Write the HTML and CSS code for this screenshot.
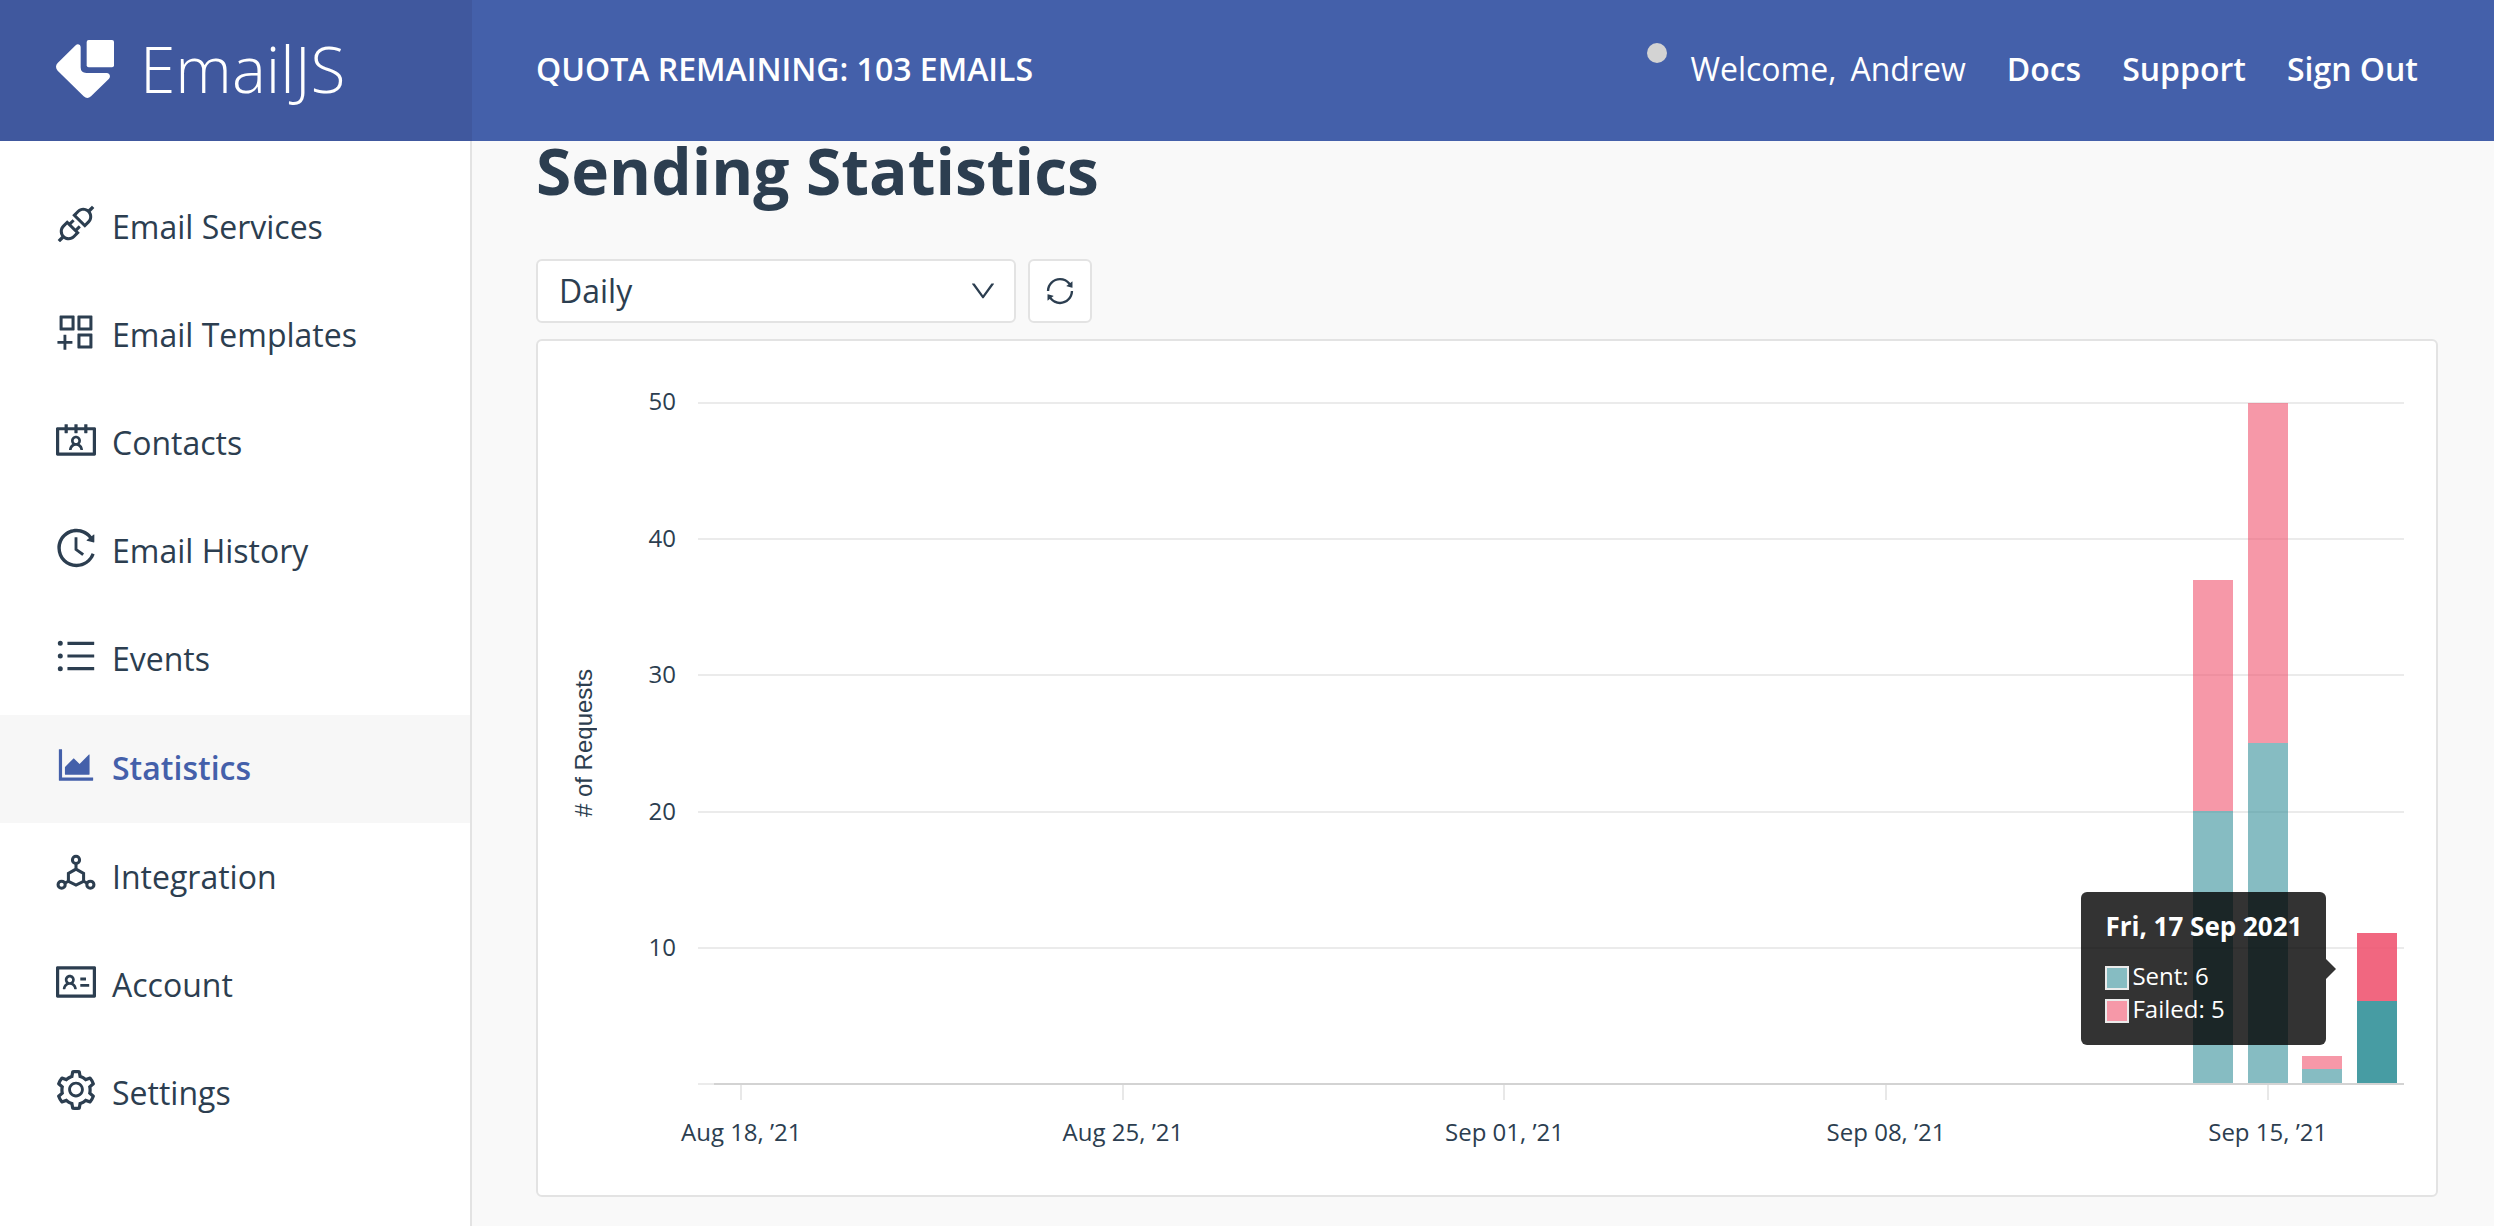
FILE: index.html
```html
<!DOCTYPE html>
<html lang="en">
<head>
<meta charset="utf-8">
<meta name="viewport" content="width=device-width, initial-scale=1">
<title>Sending Statistics - EmailJS</title>
<link rel="stylesheet" href="styles.css">
</head>
<body>
<div class="app">
  <header class="header">
    <a class="brand" href="#">
      <svg class="brand-mark" viewBox="168 120 174 174" aria-hidden="true">
        <rect x="260" y="120" width="82" height="82" rx="6"/>
        <path d="M227 136C233 130 242 134 242 142V202Q242 219 259 219H320C329 219 333 229 327 236L273 289Q262 299 251 289L173 212Q163 200 173 189Z"/>
      </svg>
      <span class="brand-name">EmailJS</span>
    </a>
    <div class="quota">QUOTA REMAINING: 103 EMAILS</div>
    <nav class="user-nav" aria-label="User">
      <span class="status-dot"></span>
      <span class="welcome"><span>Welcome,</span><span>Andrew</span></span>
      <a class="user-link" href="#">Docs</a>
      <a class="user-link" href="#">Support</a>
      <a class="user-link" href="#">Sign Out</a>
    </nav>
  </header>

  <nav class="sidebar" aria-label="Main">
    <a class="menu-item" href="#">
      <svg class="menu-icon" viewBox="64 64 896 896" aria-hidden="true"><path d="M917.7 148.8l-42.4-42.4c-1.6-1.6-3.6-2.3-5.7-2.3s-4.1.8-5.7 2.3l-76.1 76.1a199.27 199.27 0 00-112.1-34.3c-51.2 0-102.4 19.5-141.5 58.6L432.3 308.7a8.03 8.03 0 000 11.3L704 591.7c1.6 1.6 3.6 2.3 5.7 2.3 2 0 4.1-.8 5.7-2.3l101.9-101.9c68.9-69 77-175.7 24.3-253.5l76.1-76.1c3.1-3.2 3.1-8.3 0-11.4zM769.1 441.7l-59.4 59.4-186.8-186.8 59.4-59.4c24.9-24.9 58.1-38.7 93.4-38.7 35.3 0 68.4 13.7 93.4 38.7 24.9 24.9 38.7 58.1 38.7 93.4 0 35.3-13.8 68.4-38.7 93.4zm-190.2 105a8.03 8.03 0 00-11.3 0L501 613.3 410.7 523l66.7-66.7c3.1-3.1 3.1-8.2 0-11.3L441 408.6a8.03 8.03 0 00-11.3 0L363 475.3l-43-43a7.85 7.85 0 00-5.7-2.3c-2 0-4.1.8-5.7 2.3L206.8 534.2c-68.9 69-77 175.7-24.3 253.5l-76.1 76.1a8.03 8.03 0 000 11.3l42.4 42.4c1.6 1.6 3.6 2.3 5.7 2.3s4.1-.8 5.7-2.3l76.1-76.1c33.7 22.9 72.9 34.3 112.1 34.3 51.2 0 102.4-19.5 141.5-58.6l101.9-101.9c3.1-3.1 3.1-8.2 0-11.3l-43-43 66.7-66.7c3.1-3.1 3.1-8.2 0-11.3l-36.6-36.2zM441.7 769.1a131.32 131.32 0 01-93.4 38.7c-35.3 0-68.4-13.7-93.4-38.7a131.32 131.32 0 01-38.7-93.4c0-35.3 13.7-68.4 38.7-93.4l59.4-59.4 186.8 186.8-59.4 59.4z"/></svg>
      <span>Email Services</span>
    </a>
    <a class="menu-item" href="#">
      <svg class="menu-icon" viewBox="64 64 896 896" aria-hidden="true"><path d="M464 144H160c-8.8 0-16 7.2-16 16v304c0 8.8 7.2 16 16 16h304c8.8 0 16-7.2 16-16V160c0-8.8-7.2-16-16-16zm-52 268H212V212h200v200zm452-268H560c-8.8 0-16 7.2-16 16v304c0 8.8 7.2 16 16 16h304c8.8 0 16-7.2 16-16V160c0-8.8-7.2-16-16-16zm-52 268H612V212h200v200zm52 132H560c-8.8 0-16 7.2-16 16v304c0 8.8 7.2 16 16 16h304c8.8 0 16-7.2 16-16V560c0-8.8-7.2-16-16-16zm-52 268H612V612h200v200zM424 712H296V584c0-4.4-3.6-8-8-8h-48c-4.4 0-8 3.6-8 8v128H104c-4.4 0-8 3.6-8 8v48c0 4.4 3.6 8 8 8h128v128c0 4.4 3.6 8 8 8h48c4.4 0 8-3.6 8-8V776h128c4.4 0 8-3.6 8-8v-48c0-4.4-3.6-8-8-8z"/></svg>
      <span>Email Templates</span>
    </a>
    <a class="menu-item" href="#">
      <svg class="menu-icon" viewBox="64 64 896 896" aria-hidden="true"><path d="M594.3 601.5a111.8 111.8 0 0029.1-75.5c0-61.9-49.9-112-111.4-112s-111.4 50.1-111.4 112c0 29.1 11 55.5 29.1 75.5a158.09 158.09 0 00-74.6 126.1 8 8 0 008 8.4H407c4.2 0 7.6-3.3 7.9-7.5 3.8-50.6 46-90.5 97.2-90.5s93.4 40 97.2 90.5c.3 4.2 3.7 7.5 7.9 7.5H661a8 8 0 008-8.4c-2.8-53.3-32-99.7-74.7-126.1zM512 578c-28.5 0-51.7-23.3-51.7-52s23.2-52 51.7-52 51.7 23.3 51.7 52-23.2 52-51.7 52zm416-354H768v-56c0-4.4-3.6-8-8-8h-56c-4.4 0-8 3.6-8 8v56H548v-56c0-4.4-3.6-8-8-8h-56c-4.4 0-8 3.6-8 8v56H328v-56c0-4.4-3.6-8-8-8h-56c-4.4 0-8 3.6-8 8v56H96c-17.7 0-32 14.3-32 32v576c0 17.7 14.3 32 32 32h832c17.7 0 32-14.3 32-32V256c0-17.7-14.3-32-32-32zm-40 568H136V296h120v56c0 4.4 3.6 8 8 8h56c4.4 0 8-3.6 8-8v-56h148v56c0 4.4 3.6 8 8 8h56c4.4 0 8-3.6 8-8v-56h148v56c0 4.4 3.6 8 8 8h56c4.4 0 8-3.6 8-8v-56h120v496z"/></svg>
      <span>Contacts</span>
    </a>
    <a class="menu-item" href="#">
      <svg class="menu-icon" viewBox="64 64 896 896" aria-hidden="true"><path d="M536.1 273H488c-4.4 0-8 3.6-8 8v275.3c0 2.6 1.2 5 3.3 6.5l165.3 120.7c3.6 2.6 8.6 1.9 11.2-1.7l28.6-39c2.7-3.7 1.9-8.7-1.7-11.2L544.1 528.5V281c0-4.4-3.6-8-8-8zm219.8 75.2l156.8 38.3c5 1.2 9.9-2.6 9.9-7.7l.8-161.5c0-6.7-7.7-10.5-12.9-6.3L752.9 334.1a8 8 0 003 14.1zm167.7 301.1l-56.7-19.5a8 8 0 00-10.1 4.8c-1.9 5.1-3.9 10.1-6 15.1-17.8 42.1-43.3 80-75.9 112.5a353 353 0 01-112.5 75.9 352.18 352.18 0 01-137.7 27.8c-47.8 0-94.1-9.3-137.7-27.8a353 353 0 01-112.5-75.9c-32.5-32.5-58-70.4-75.9-112.5A353.44 353.44 0 01171 512c0-47.8 9.3-94.2 27.8-137.8 17.8-42.1 43.3-80 75.9-112.5a353 353 0 01112.5-75.9C430.6 167.3 477 158 524.8 158s94.1 9.3 137.7 27.8A353 353 0 01775 261.7c10.2 10.3 19.8 21 28.6 32.3l59.8-46.8C784.7 146.6 662.2 81.9 524.6 82 285 82.1 92.6 276.7 95 516.4 97.4 751.9 288.9 942 524.8 942c185.5 0 343.5-117.6 403.7-282.3 1.5-4.2-.7-8.9-4.9-10.4z"/></svg>
      <span>Email History</span>
    </a>
    <a class="menu-item" href="#">
      <svg class="menu-icon" viewBox="64 64 896 896" aria-hidden="true"><path d="M912 192H328c-4.4 0-8 3.6-8 8v56c0 4.4 3.6 8 8 8h584c4.4 0 8-3.6 8-8v-56c0-4.4-3.6-8-8-8zm0 284H328c-4.4 0-8 3.6-8 8v56c0 4.4 3.6 8 8 8h584c4.4 0 8-3.6 8-8v-56c0-4.4-3.6-8-8-8zm0 284H328c-4.4 0-8 3.6-8 8v56c0 4.4 3.6 8 8 8h584c4.4 0 8-3.6 8-8v-56c0-4.4-3.6-8-8-8zM104 228a56 56 0 10112 0 56 56 0 10-112 0zm0 284a56 56 0 10112 0 56 56 0 10-112 0zm0 284a56 56 0 10112 0 56 56 0 10-112 0z"/></svg>
      <span>Events</span>
    </a>
    <a class="menu-item menu-item-active" href="#" aria-current="page">
      <svg class="menu-icon" viewBox="64 64 896 896" aria-hidden="true"><path d="M888 792H200V168c0-4.4-3.6-8-8-8h-56c-4.4 0-8 3.6-8 8v688c0 4.4 3.6 8 8 8h752c4.4 0 8-3.6 8-8v-56c0-4.4-3.6-8-8-8zm-616-64h536c4.4 0 8-3.6 8-8V284c0-7.2-8.7-10.7-13.7-5.7L592 488.6l-125.4-124a8.03 8.03 0 00-11.3 0l-189 189.6a7.87 7.87 0 00-2.3 5.6V720c0 4.4 3.6 8 8 8z"/></svg>
      <span>Statistics</span>
    </a>
    <a class="menu-item" href="#">
      <svg class="menu-icon menu-icon-line" viewBox="64 64 896 896" aria-hidden="true">
        <circle cx="512" cy="196" r="80"/><circle cx="190" cy="752" r="80"/><circle cx="834" cy="752" r="80"/>
        <path d="M512 276V402M512 402L682 498V674L512 762L342 674V498ZM342 674L262 716M682 674L762 716"/>
      </svg>
      <span>Integration</span>
    </a>
    <a class="menu-item" href="#">
      <svg class="menu-icon" viewBox="64 64 896 896" aria-hidden="true"><path d="M928 160H96c-17.7 0-32 14.3-32 32v640c0 17.7 14.3 32 32 32h832c17.7 0 32-14.3 32-32V192c0-17.7-14.3-32-32-32zm-40 632H136V232h752v560zM610.3 476h123.4c1.3 0 2.3-3.6 2.3-8v-48c0-4.4-1-8-2.3-8H610.3c-1.3 0-2.3 3.6-2.3 8v48c0 4.4 1 8 2.3 8zm4.8 144h185.7c3.9 0 7.1-3.6 7.1-8v-48c0-4.4-3.2-8-7.1-8H615.1c-3.9 0-7.1 3.6-7.1 8v48c0 4.4 3.2 8 7.1 8zM224 673h43.9c4.2 0 7.6-3.3 7.9-7.5 3.8-50.5 46-90.5 97.2-90.5s93.4 40 97.2 90.5c.3 4.2 3.7 7.5 7.9 7.5H522a8 8 0 008-8.4c-2.8-53.3-32-99.7-74.6-126.1a111.8 111.8 0 0029.1-75.5c0-61.9-49.9-112-111.4-112s-111.4 50.1-111.4 112c0 29.1 11 55.5 29.1 75.5a158.09 158.09 0 00-74.6 126.1c-.4 4.6 3.2 8.4 7.8 8.4zm149-262c28.5 0 51.7 23.3 51.7 52s-23.2 52-51.7 52-51.7-23.3-51.7-52 23.2-52 51.7-52z"/></svg>
      <span>Account</span>
    </a>
    <a class="menu-item" href="#">
      <svg class="menu-icon" viewBox="64 64 896 896" aria-hidden="true"><path d="M924.8 625.7l-65.5-56c3.1-19 4.7-38.4 4.7-57.8s-1.6-38.8-4.7-57.8l65.5-56a32.03 32.03 0 009.3-35.2l-.9-2.6a443.74 443.74 0 00-79.7-137.9l-1.8-2.1a32.12 32.12 0 00-35.1-9.5l-81.3 28.9c-30-24.6-63.5-44-99.7-57.6l-15.7-85a32.05 32.05 0 00-25.8-25.7l-2.7-.5c-52.1-9.4-106.9-9.4-159 0l-2.7.5a32.05 32.05 0 00-25.8 25.7l-15.8 85.4a351.86 351.86 0 00-99 57.4l-81.9-29.1a32 32 0 00-35.1 9.5l-1.8 2.1a446.02 446.02 0 00-79.7 137.9l-.9 2.6c-4.5 12.5-.8 26.5 9.3 35.2l66.3 56.6c-3.1 18.8-4.6 38-4.6 57.1 0 19.2 1.5 38.4 4.6 57.1L99 625.5a32.03 32.03 0 00-9.3 35.2l.9 2.6c18.1 50.4 44.9 96.9 79.7 137.9l1.8 2.1a32.12 32.12 0 0035.1 9.5l81.9-29.1c29.8 24.5 63.1 43.9 99 57.4l15.8 85.4a32.05 32.05 0 0025.8 25.7l2.7.5a449.4 449.4 0 00159 0l2.7-.5a32.05 32.05 0 0025.8-25.7l15.7-85a350 350 0 0099.7-57.6l81.3 28.9a32 32 0 0035.1-9.5l1.8-2.1c34.8-41.1 61.6-87.5 79.7-137.9l.9-2.6c4.5-12.3.8-26.3-9.3-35zM788.3 465.9c2.5 15.1 3.8 30.6 3.8 46.1s-1.3 31-3.8 46.1l-6.6 40.1 74.7 63.9a370.03 370.03 0 01-42.6 73.6L721 702.8l-31.4 25.8c-23.9 19.6-50.5 35-79.3 45.8l-38.1 14.3-17.9 97a377.5 377.5 0 01-85 0l-17.9-97.2-37.8-14.5c-28.5-10.8-55-26.2-78.7-45.7l-31.4-25.9-93.4 33.2c-17-22.9-31.2-47.6-42.6-73.6l75.5-64.5-6.5-40c-2.4-14.9-3.7-30.3-3.7-45.5 0-15.3 1.2-30.6 3.7-45.5l6.5-40-75.5-64.5c11.3-26.1 25.6-50.7 42.6-73.6l93.4 33.2 31.4-25.9c23.7-19.5 50.2-34.9 78.7-45.7l37.9-14.3 17.9-97.2c28.1-3.2 56.8-3.2 85 0l17.9 97 38.1 14.3c28.7 10.8 55.4 26.2 79.3 45.8l31.4 25.8 92.8-32.9c17 22.9 31.2 47.6 42.6 73.6L781.8 426l6.5 39.9zM512 326c-97.2 0-176 78.8-176 176s78.8 176 176 176 176-78.8 176-176-78.8-176-176-176zm79.2 255.2A111.6 111.6 0 01512 614c-29.9 0-58-11.7-79.2-32.8A111.6 111.6 0 01400 502c0-29.9 11.7-58 32.8-79.2C454 401.6 482.1 390 512 390c29.9 0 58 11.6 79.2 32.8A111.6 111.6 0 01624 502c0 29.9-11.7 58-32.8 79.2z"/></svg>
      <span>Settings</span>
    </a>
  </nav>

  <main class="content">
    <h1 class="page-title">Sending Statistics</h1>
    <div class="toolbar">
      <div class="select-wrap">
        <select class="select" aria-label="Interval">
          <option>Daily</option>
          <option>Monthly</option>
        </select>
        <svg class="select-arrow" viewBox="64 64 896 896" aria-hidden="true"><path d="M884 256h-75c-5.1 0-9.9 2.5-12.9 6.6L512 654.2 227.9 262.6c-3-4.1-7.8-6.6-12.9-6.6h-75c-6.5 0-10.3 7.4-6.5 12.7l352.6 486.1c12.8 17.6 39 17.6 51.7 0l352.6-486.1c3.9-5.3.1-12.7-6.4-12.7z"/></svg>
      </div>
      <button class="refresh" type="button" aria-label="Refresh">
        <svg class="refresh-icon" viewBox="64 64 896 896" aria-hidden="true"><path d="M168 504.2c1-43.7 10-86.1 26.9-126 17.3-41 42.1-77.7 73.7-109.4S337 212.3 378 195c42.4-17.9 87.4-27 133.9-27s91.5 9.1 133.8 27A341.5 341.5 0 01755 268.8c9.9 9.9 19.2 20.4 27.8 31.4l-60.2 47a8 8 0 003 14.1l175.7 43c5 1.2 9.9-2.6 9.9-7.7l.8-180.9c0-6.7-7.7-10.5-12.9-6.3l-56.4 44.1C765.8 155.1 646.2 92 511.8 92 282.7 92 96.3 275.6 92 503.8a8 8 0 008 8.2h60c4.4 0 7.9-3.5 8-7.8zm756 7.8h-60c-4.4 0-7.9 3.5-8 7.8-1 43.7-10 86.1-26.9 126-17.3 41-42.1 77.8-73.7 109.4A342.45 342.45 0 01512.1 856a342.24 342.24 0 01-243.2-100.8c-9.9-9.9-19.2-20.4-27.8-31.4l60.2-47a8 8 0 00-3-14.1l-175.7-43c-5-1.2-9.9 2.6-9.9 7.7l-.7 181c0 6.7 7.7 10.5 12.9 6.3l56.4-44.1C258.2 868.9 377.8 932 512.2 932c229.2 0 415.5-183.7 419.8-411.8a8 8 0 00-8-8.2z"/></svg>
      </button>
    </div>

    <section class="chart" aria-label="Requests per day">
      <div class="y-title">
        <span class="y-title-text"># of Requests</span>
      </div>
      <div class="y-labels">
        <span>50</span><span>40</span><span>30</span><span>20</span><span>10</span>
      </div>
      <div class="plot">
        <div class="grid-lines">
          <i></i><i></i><i></i><i></i><i></i>
        </div>
        <div class="days bars">
          <div class="day day-28">
            <div class="bar bar-failed" style="height:34%"></div>
            <div class="bar bar-sent" style="height:40%"></div>
          </div>
          <div class="day day-29">
            <div class="bar bar-failed" style="height:50%"></div>
            <div class="bar bar-sent" style="height:50%"></div>
          </div>
          <div class="day day-30">
            <div class="bar bar-failed" style="height:2%"></div>
            <div class="bar bar-sent" style="height:2%"></div>
          </div>
          <div class="day day-31 day-hover">
            <div class="bar bar-failed" style="height:10%"></div>
            <div class="bar bar-sent" style="height:12%"></div>
            <div class="tooltip" role="tooltip">
              <div class="tooltip-title">Fri, 17 Sep 2021</div>
              <div class="tooltip-row"><span class="swatch swatch-sent"></span>Sent: 6</div>
              <div class="tooltip-row"><span class="swatch swatch-failed"></span>Failed: 5</div>
            </div>
          </div>
        </div>
      </div>
      <div class="days x-axis">
        <span class="x-label day-1">Aug 18, ’21</span>
        <span class="x-label day-8">Aug 25, ’21</span>
        <span class="x-label day-15">Sep 01, ’21</span>
        <span class="x-label day-22">Sep 08, ’21</span>
        <span class="x-label day-29">Sep 15, ’21</span>
      </div>
    </section>
  </main>
</div>
</body>
</html>
```

FILE: styles.css
```css
* {
  box-sizing: border-box;
}

body {
  margin: 0;
  font-family: "Open Sans", "Noto Sans", sans-serif;
  font-size: 32px;
  line-height: 48px;
  color: #2c3e50;
  background: #f9f9f9;
}

a {
  color: inherit;
  text-decoration: none;
}

svg {
  display: block;
  flex: none;
  fill: currentColor;
}

.app {
  display: grid;
  grid-template-columns: 472px minmax(0, 1fr);
  grid-template-rows: auto 1fr;
  min-height: 100vh;
}

/* Header */
.header {
  grid-column: 1 / -1;
  display: flex;
  align-items: stretch;
  height: 141px;
  color: #fff;
  background: #4460aa;
}

.brand {
  display: flex;
  align-items: center;
  gap: 26px;
  width: 472px;
  padding: 0 0 3px 56px;
  background: #40589e;
}

.brand-mark {
  width: 58px;
  height: 58px;
}

.brand-name {
  font-size: 64px;
  font-weight: 300;
  line-height: 64px;
}

.quota {
  flex: 1;
  align-self: center;
  padding: 0 0 3px 64px;
  font-weight: 600;
}

.user-nav {
  display: flex;
  align-items: center;
  gap: 41px;
  padding: 0 76px 3px 0;
}

.status-dot {
  width: 20px;
  height: 20px;
  margin: 0 -18px 33px 0;
  border-radius: 50%;
  background: #d3d3d3;
}

.welcome {
  display: flex;
  gap: 14px;
}

.user-link {
  font-weight: 600;
}

/* Sidebar */
.sidebar {
  padding-top: 34px;
  background: #fff;
  border-right: 2px solid #e3e3e3;
}

.menu-item {
  display: flex;
  align-items: center;
  gap: 16px;
  height: 108px;
  padding: 0 24px 4px 56px;
}

.menu-item-active {
  margin-bottom: 2px;
  padding-bottom: 2px;
  font-weight: 600;
  color: #4460aa;
  background: #f7f7f7;
}

.menu-icon {
  width: 40px;
  height: 40px;
  margin-bottom: 6px;
}

.menu-icon-line {
  fill: none;
  stroke: currentColor;
  stroke-width: 68;
}

/* Content */
.content {
  padding: 2px 56px 29px 64px;
}

.page-title {
  margin: 0 0 60px;
  font-size: 64px;
  font-weight: 700;
  line-height: 56px;
}

.toolbar {
  display: flex;
  gap: 12px;
  margin-bottom: 16px;
}

.select-wrap {
  display: grid;
  align-items: center;
  width: 480px;
}

.select,
.refresh {
  height: 64px;
  border: 2px solid #e3e3e3;
  border-radius: 6px;
  color: inherit;
  background: #fff;
}

.select {
  grid-area: 1 / 1;
  width: 100%;
  padding: 0 21px;
  appearance: none;
  font: inherit;
}

.select-arrow {
  grid-area: 1 / 1;
  justify-self: end;
  width: 26px;
  height: 26px;
  margin-right: 20px;
  pointer-events: none;
}

.refresh {
  display: flex;
  align-items: center;
  justify-content: center;
  width: 64px;
  padding: 0;
}

.refresh-icon {
  width: 28px;
  height: 28px;
}

/* Chart */
.chart {
  display: grid;
  grid-template-columns: 32px 66px minmax(0, 1fr);
  grid-template-rows: 683px auto;
  column-gap: 16px;
  padding: 61px 32px 47px 30px;
  border: 2px solid #e3e3e3;
  border-radius: 6px;
  font-size: 24px;
  line-height: 32px;
  background: #fff;
}

.y-title {
  display: flex;
  align-items: center;
  justify-content: center;
}

.y-title-text {
  font-family: "Liberation Sans", Arial, sans-serif;
  white-space: nowrap;
  writing-mode: vertical-rl;
  transform: rotate(180deg);
}

.y-labels {
  display: grid;
  grid-template-rows: repeat(5, 1fr);
  margin: -17px 6px 17px 0;
  text-align: right;
}

.plot {
  display: grid;
}

.grid-lines {
  grid-area: 1 / 1;
  display: grid;
  grid-template-rows: repeat(5, 1fr);
  border-bottom: 2px solid #ebebeb;
}

.grid-lines i {
  border-top: 2px solid #ebebeb;
}

.days {
  display: grid;
  grid-template-columns: repeat(31, minmax(0, 1fr));
  margin-left: 16px;
}

.bars {
  grid-area: 1 / 1;
  padding-top: 1px;
  border-bottom: 2px solid #d3d3d3;
}

.day {
  position: relative;
  display: flex;
  flex-direction: column;
  justify-content: flex-end;
  align-items: center;
  grid-row: 1;
}

.day-1 { grid-column: 1; }
.day-8 { grid-column: 8; }
.day-15 { grid-column: 15; }
.day-22 { grid-column: 22; }
.day-28 { grid-column: 28; }
.day-29 { grid-column: 29; }
.day-30 { grid-column: 30; }
.day-31 { grid-column: 31; }

.bar {
  width: 73%;
}

.bar-sent {
  background: rgba(53, 143, 153, 0.6);
}

.bar-failed {
  background: rgba(240, 83, 110, 0.6);
}

.day-hover .bar-sent {
  background: rgba(51, 145, 153, 0.9);
}

.day-hover .bar-failed {
  background: rgba(239, 86, 114, 0.9);
}

.x-axis {
  grid-column: 3;
}

.x-label {
  display: flex;
  flex-direction: column;
  align-items: center;
  grid-row: 1;
  gap: 16px;
  white-space: nowrap;
}

.x-label::before {
  content: "";
  width: 2px;
  height: 15px;
  background: #e8e8e8;
}

/* Tooltip */
.tooltip {
  position: absolute;
  right: calc(100% + 23px);
  bottom: 38px;
  padding: 18px 24px 20px;
  border-radius: 6px;
  color: #fff;
  white-space: nowrap;
  background: rgba(0, 0, 0, 0.8);
}

.tooltip::after {
  content: "";
  position: absolute;
  top: calc(50% - 10px);
  left: 100%;
  border: 10px solid transparent;
  border-right-width: 0;
  border-left-color: rgba(0, 0, 0, 0.8);
}

.tooltip-title {
  margin-bottom: 17px;
  font-size: 26px;
  font-weight: 700;
}

.tooltip-row {
  display: flex;
  align-items: center;
  gap: 3px;
  line-height: 33px;
}

.swatch {
  width: 24px;
  height: 24px;
  margin-top: 4px;
  border: 2px solid #ebebeb;
}

.swatch-sent {
  background: #86bcc2;
}

.swatch-failed {
  background: #f698a8;
}
```
